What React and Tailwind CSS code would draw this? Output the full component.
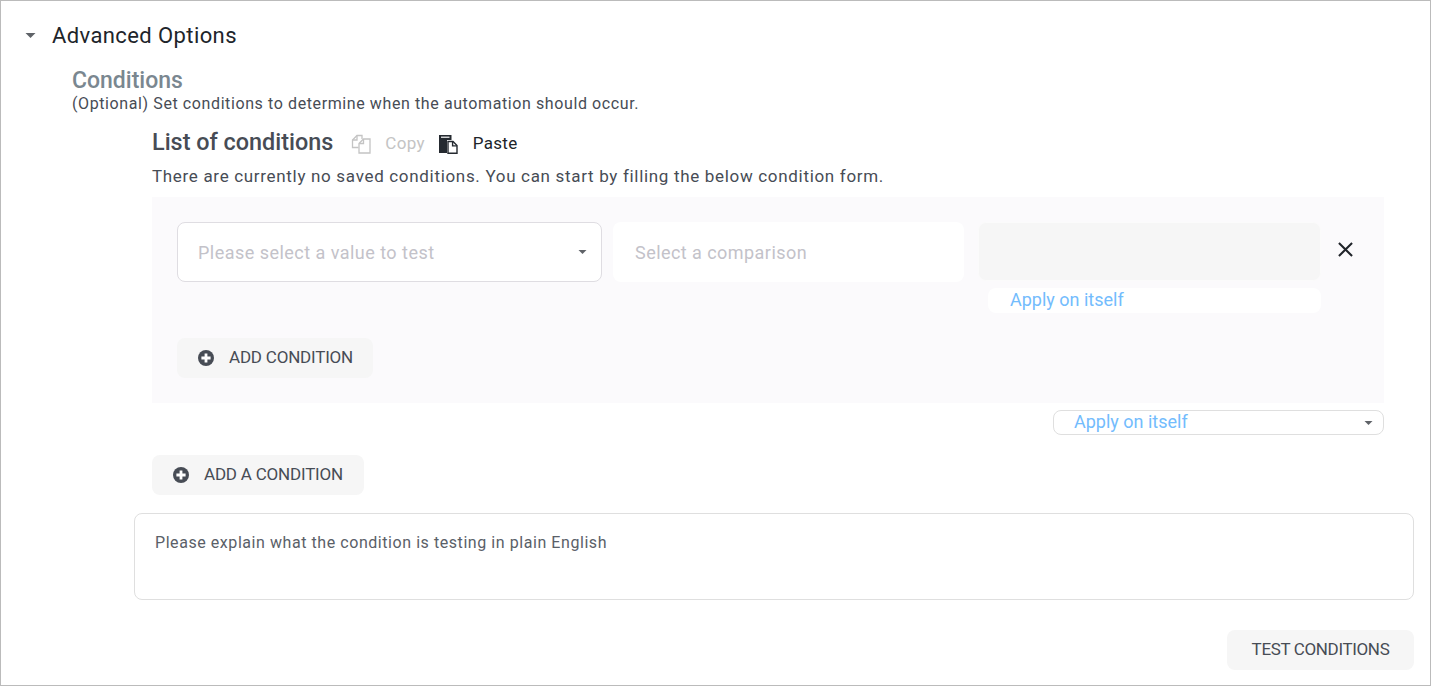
import React from "react";

const Caret = ({ className = "" }) => (
  <svg viewBox="0 0 10 5" className={className}>
    <path d="M0 0h10L5 5z" fill="currentColor" />
  </svg>
);

const PlusCircle = () => (
  <svg viewBox="0 0 16 16" className="w-4 h-4 shrink-0">
    <circle cx="8" cy="8" r="8" fill="#474c55" />
    <path d="M6.6 3.4h2.8v3.2h3.2v2.8H9.4v3.2H6.6V9.4H3.4V6.6h3.2z" fill="#fff" />
  </svg>
);

const CopyIcon = () => (
  <svg viewBox="0 0 20 20" className="w-5 h-5" fill="none" stroke="#c4c4c4" strokeWidth="1.3">
    <path d="M7.5 13.5H1.5V6L6 1.5H11v3.5" />
    <path d="M6 1.5V6H1.5" />
    <path d="M8 9.5L12.5 5h6.5v14H8z" />
    <path d="M12.5 5v4.5H8" />
  </svg>
);

const PasteIcon = () => (
  <svg viewBox="0 0 20 20" className="w-5 h-5">
    <path d="M1 1h12.5v5H9v13H1z" fill="#252a30" />
    <path d="M3 2.6h8.5v1.2H3z" fill="#fff" />
    <path d="M10 7.5h5l4 4V19.2H10z" fill="#fff" stroke="#252a30" strokeWidth="1.4" />
    <path d="M14.6 7.5v4.4H19" fill="none" stroke="#252a30" strokeWidth="1.4" />
  </svg>
);

const GrayButton = ({ children, className = "" }) => (
  <button className={`h-10 flex items-center rounded-lg bg-[#f6f6f6] text-[#474c55] text-[17px] ${className}`}>
    {children}
  </button>
);

export default function App() {
  return (
    <div
      className="w-[1431px] h-[686px] border border-[#bbbbbb] bg-white overflow-hidden text-[#474c55]"
      style={{ fontFamily: 'Roboto, sans-serif' }}
    >
      <div className="flex items-center h-[30px] mt-[19px] pl-6">
        <Caret className="w-[11px] h-[5px] text-[#5f6368]" />
        <span className="ml-4 text-[22px] text-[#20242a] tracking-[0.4px]">Advanced Options</span>
      </div>

      <div className="pl-[71px] mt-4">
        <div className="text-[23px] leading-[30px] font-medium text-[#7a8790]">Conditions</div>
        <div className="text-[16px] leading-[20px] -mt-[2px] tracking-[0.6px]">(Optional) Set conditions to determine when the automation should occur.</div>
      </div>

      <div className="pl-[151px] pr-[46px] mt-[15px]">
        <div className="flex items-center h-[30px]">
          <span className="pb-[2px] text-[23.4px] font-medium text-[#474c55]">List of conditions</span>
          <span className="ml-[18px]"><CopyIcon /></span>
          <span className="ml-[14px] text-[17px] text-[#c4c4c4] tracking-[0.3px]">Copy</span>
          <span className="ml-[13px]"><PasteIcon /></span>
          <span className="ml-[15px] text-[17px] text-[#20242a] tracking-[0.3px]">Paste</span>
        </div>
        <div className="text-[17px] leading-[22px] mt-[6px] tracking-[0.68px]">There are currently no saved conditions. You can start by filling the below condition form.</div>

        <div className="mt-[10px] h-[206px] bg-[#fbfafc] pt-[25px] pl-[25px]">
          <div className="flex">
            <div className="w-[425px] h-[60px] flex items-center justify-between rounded-lg border border-[#dfdde2] bg-white pl-5 pr-[14px] text-[18px] text-[#c3c2c9] tracking-[0.47px]">
              <span>Please select a value to test</span>
              <Caret className="w-[9px] h-[4px] text-[#5f6368]" />
            </div>
            <div className="ml-[11px] w-[351px] h-[60px] flex items-center rounded-lg bg-white pl-[22px] text-[18px] text-[#c3c2c9] tracking-[0.45px]">
              Select a comparison
            </div>
            <div className="ml-[14px] w-[343px]">
              <div className="h-[59px] rounded-lg bg-[#f6f6f6] border border-[#fbfbfb]" />
              <div className="ml-[10px] mt-[7px] h-[25px] flex items-center rounded-lg bg-white pl-[22px] pb-[2px] text-[18px] text-[#73bcfd]">
                Apply on itself
              </div>
            </div>
            <svg viewBox="0 0 16 16" className="ml-[17px] mt-5 w-[15px] h-[15px]" fill="none" stroke="#20242a" strokeWidth="2.2">
              <path d="M1 1l14 14M15 1L1 15" />
            </svg>
          </div>
          <GrayButton className="mt-[25px] w-[196px] pl-[21px] gap-[15px] tracking-[-0.2px]">
            <PlusCircle />
            ADD CONDITION
          </GrayButton>
        </div>

        <div className="flex justify-end mt-[7px]">
          <div className="w-[331px] h-[25px] flex items-center justify-between rounded-lg border border-[#dfdfdf] bg-white pl-5 pr-[10px] text-[18px] text-[#73bcfd]">
            <span className="pb-[2px]">Apply on itself</span>
            <Caret className="w-[9px] h-[4px] text-[#5f6368]" />
          </div>
        </div>

        <GrayButton className="mt-5 w-[212px] pl-[21px] gap-[15px] tracking-[-0.2px]">
          <PlusCircle />
          ADD A CONDITION
        </GrayButton>
      </div>

      <div className="pl-[133px] pr-4">
        <div className="mt-[18px] h-[87px] rounded-lg border border-[#dfdfdf] pl-5 pt-[19px] text-[16px] leading-[20px] text-[#5a6068] tracking-[0.56px]">
          Please explain what the condition is testing in plain English
        </div>
        <div className="flex justify-end mt-[30px]">
          <GrayButton className="w-[187px] justify-center tracking-[-0.35px]">TEST CONDITIONS</GrayButton>
        </div>
      </div>
    </div>
  );
}
